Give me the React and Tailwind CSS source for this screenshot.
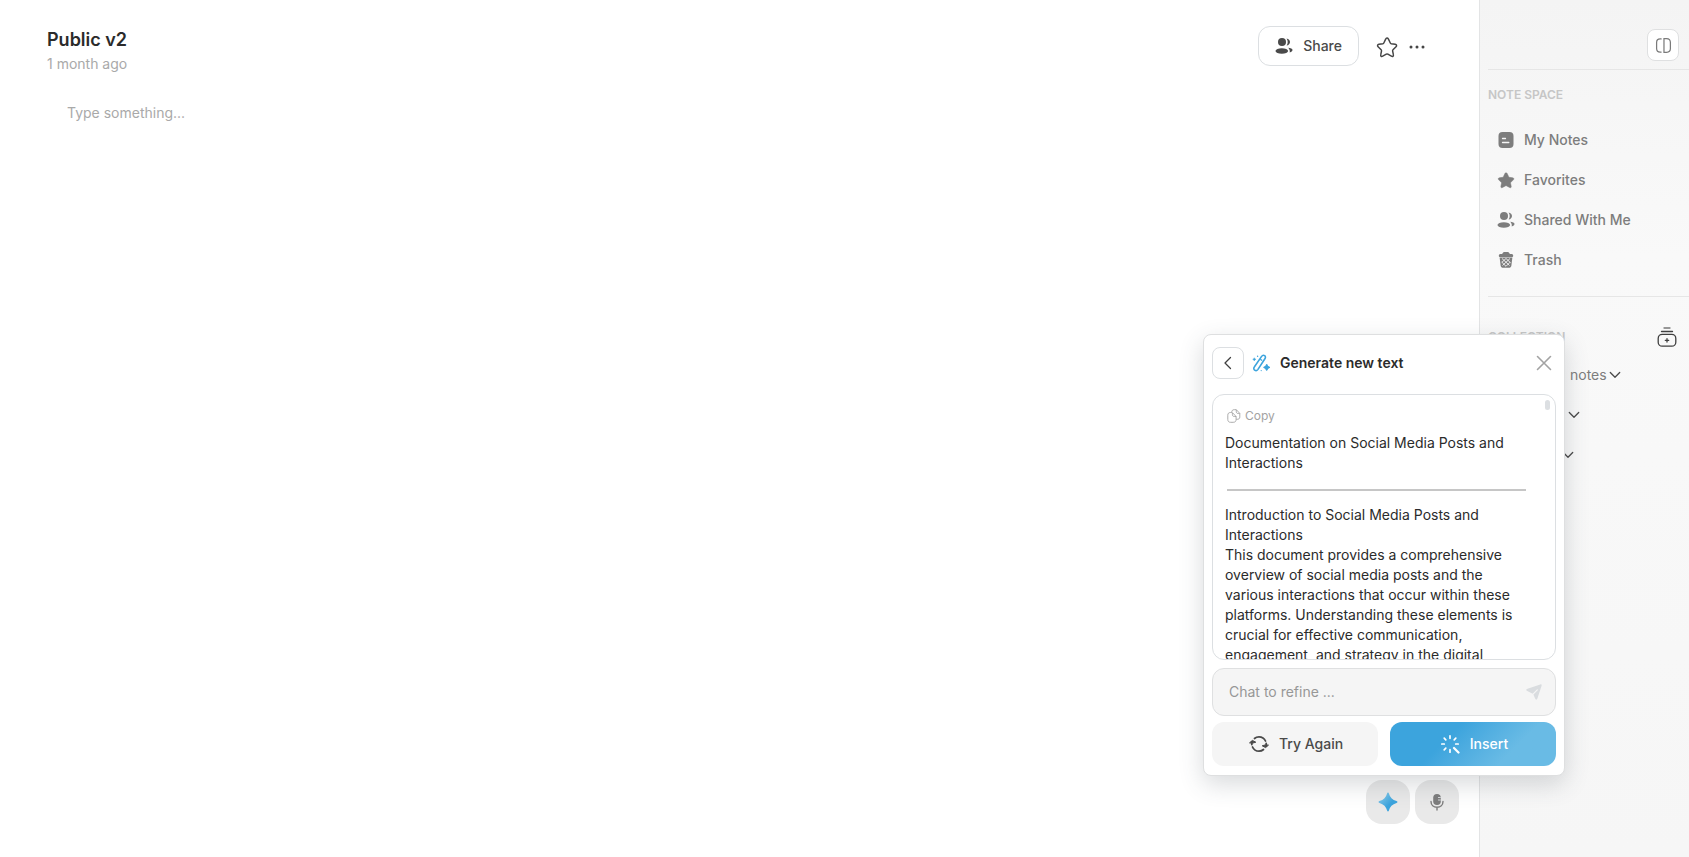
import React, { useState } from 'react';

const UsersIcon = ({ className }) => (
    <svg className={className} viewBox="0 0 18 18" fill="currentColor" aria-hidden="true">
        <circle cx="7" cy="5" r="4" />
        <ellipse cx="6.8" cy="14" rx="6.3" ry="2.8" />
        <path d="M11.6 1.4c2 .3 3.4 1.800 3.400 3.600s-1.400 3.300-3.400 3.600c.7-1 1.100-2.200 1.100-3.600s-.4-2.600-1.100-3.600z" />
        <path d="M13.200 10.800c2.300.1 4.300 1 4.300 2.200 0 1.100-1.100 2-2.800 2.400.4-1.700-.2-3.300-1.500-4.600z" />
    </svg>
);

const NoteIcon = ({ className }) => (
    <svg className={className} viewBox="0 0 18 18" aria-hidden="true">
        <rect x="1.500" y="1" width="15" height="16" rx="4" fill="currentColor" />
        <path d="M5.500 7.500H8.500M5.500 11.500H11.800" stroke="#f6f6f6" strokeWidth="1.300" strokeLinecap="round" />
    </svg>
);

const STAR = 'M9 1.700c.6 0 .9.400 1.200.9l1.500 3.100c.2.400.4.500.8.600l3.200.5c1.200.2 1.500 1.200.7 2l-2.500 2.500c-.3.300-.4.600-.3 1l.6 3c.3 1.300-.6 1.800-1.600 1.200l-2.900-1.600c-.4-.2-.9-.2-1.300 0l-2.900 1.600c-1 .6-1.900.1-1.600-1.200l.6-3c.1-.4 0-.7-.3-1L1.700 8.800c-.8-.8-.5-1.800.7-2l3.200-.5c.4-.1.600-.2.800-.6l1.500-3.100c.2-.5.5-.9 1.100-.9z';

const StarIcon = ({ className, filled }) => (
    <svg
        className={className}
        viewBox="0 0 18 18"
        fill={filled ? 'currentColor' : 'none'}
        stroke="currentColor"
        strokeWidth={filled ? 0.5 : 1.2}
        aria-hidden="true"
    >
        <path d={STAR} />
    </svg>
);

const TrashIcon = ({ className }) => (
    <svg className={className} viewBox="0 0 18 18" aria-hidden="true">
        <path
            d="M2.600 6.400h12.800l-1 8c-.2 1.500-1.200 2.400-2.700 2.400H6.300c-1.500 0-2.500-.9-2.700-2.400z"
            fill="currentColor"
        />
        <path
            d="M1.800 4.700C1.800 3.600 2.600 3 3.600 3h1.500l.7-1.100C6.100 1.300 6.600 1 7.300 1h3.400c.7 0 1.200.300 1.500.9l.7 1.100h1.500c1 0 1.800.6 1.800 1.700 0 .8-.5 1.300-1.200 1.300H3c-.7 0-1.200-.5-1.200-1.300z"
            fill="currentColor"
        />
        <path d="M5 7.500l7.500 7M9 7.500l4.500 4.200M4.700 11l4.300 4.300M13 7.500l-7.500 7M9 7.500l-4.300 4M13.300 11L9 15.300" stroke="#f8f8f8" strokeWidth="0.900" />
    </svg>
);

const PanelIcon = ({ className }) => (
    <svg className={className} viewBox="0 0 18 18" fill="none" stroke="currentColor" strokeWidth="1.300" aria-hidden="true">
        <path d="M6.500 2H5.500C3 2 1.700 3.300 1.700 5.800v6.400C1.700 14.700 3 16 5.500 16h1" strokeLinecap="round" />
        <path d="M9.500 1.800V16.200h2.800c2.700 0 4-1.300 4-4V5.800c0-2.700-1.300-4-4-4z" />
    </svg>
);

const AddCollectionIcon = ({ className }) => (
    <svg className={className} viewBox="0 0 20 20" fill="none" stroke="currentColor" strokeWidth="1.300" strokeLinecap="round" aria-hidden="true">
        <path d="M7 1h6" stroke="#777" />
        <path d="M4.500 4.500h11" />
        <rect x="1.200" y="7.400" width="17.600" height="11.800" rx="4" />
        <path d="M10 11.600v3.400M8.300 13.300h3.400" />
    </svg>
);

const ChevronIcon = ({ className }) => (
    <svg className={className} viewBox="0 0 12 12" fill="none" stroke="currentColor" strokeWidth="1.300" strokeLinecap="round" strokeLinejoin="round" aria-hidden="true">
        <path d="M1.300 3.500L6 8.300l4.700-4.800" />
    </svg>
);

const WandIcon = ({ className }) => (
    <svg className={className} viewBox="0 0 18 18" fill="none" stroke="currentColor" strokeWidth="1.600" strokeLinejoin="round" aria-hidden="true">
        <path d="M2.300 13L9.600 2.400c.8-1.100 2-1.400 3-.7s1.100 1.900.3 3L5.800 15.600c-.8 1.100-2.100 1.300-3.100.6s-1.200-2.100-.4-3.200z" />
        <path d="M8.300 5.200l1.800 1.300" strokeWidth="1.300" />
        <path d="M14.700 10.800l.9 1.700 1.700.9-1.700.9-.9 1.700-.9-1.700-1.700-.9 1.700-.9z" fill="currentColor" />
        <path d="M2.300 3.700l.6 1 1 .6-1 .6-.6 1-.6-1-1-.6 1-.6z" fill="currentColor" strokeWidth="0.400" />
        <circle cx="5.600" cy="2.200" r=".7" fill="currentColor" stroke="none" />
        <circle cx="9.200" cy="16.600" r=".6" fill="currentColor" stroke="none" />
    </svg>
);

const CopyIcon = ({ className }) => (
    <svg className={className} viewBox="0 0 14 14" fill="none" stroke="currentColor" strokeWidth="0.900" strokeLinejoin="round" aria-hidden="true">
        <path d="M4.700 3.500H3.600C1.600 3.500.8 4.500.8 6.200v4.200c0 1.900.9 2.900 2.900 2.900h2.500c2 0 2.900-1 2.900-2.900V7.500L5.400 3.600" />
        <path d="M5.400 3.700v1.700c0 1.500.6 2.100 2 2.100h1.700" />
        <path d="M4.700 3.500C4.700 1.600 5.500.7 7.300.7h2l3.500 3.700v3.500c0 1.600-.9 2.400-2.500 2.400H9.200" />
        <path d="M9.300.8v1.700c0 1.400.6 2 2 2h1.400" />
    </svg>
);

const RefreshIcon = ({ className }) => (
    <svg className={className} viewBox="0 0 20 20" fill="none" stroke="currentColor" strokeWidth="1.800" strokeLinecap="round" aria-hidden="true">
        <path d="M5.500 4.500C6.800 3.300 8.300 2.800 10 2.800c3 0 5.400 1.700 6.500 4.200" />
        <path d="M14.500 15.500c-1.300 1.200-2.800 1.700-4.500 1.700-3 0-5.400-1.700-6.500-4.200" />
        <path d="M2.800 8v2.500M17.200 12V9.500" />
        <path d="M.8 8.600l2.600-2.200 3.400 1.800-3 .9zM19.200 11.400l-2.600 2.200-3.400-1.800 3-.9z" fill="currentColor" strokeWidth="1" strokeLinejoin="round" />
    </svg>
);

const BurstIcon = ({ className }) => (
    <svg className={className} viewBox="0 0 20 20" fill="none" stroke="currentColor" strokeWidth="1.700" strokeLinecap="round" aria-hidden="true">
        <path d="M10 1.800v2.500M10 15.700v2.500M1.800 10h2.500M15.700 10h2.500M4.200 4.200l1.600 1.600M15.800 4.200l-1.600 1.600M4.200 15.800l1.600-1.600" />
        <path d="M14 14l4.500 4.500" strokeWidth="2.200" />
    </svg>
);

const SendIcon = ({ className }) => (
    <svg className={className} viewBox="0 0 18 18" aria-hidden="true">
        <path d="M15.300 1.400c1-.3 1.600.3 1.300 1.300l-4.200 12.800c-.5 1.500-1.700 1.500-2.300.1L8.200 11 2.300 8.100C.8 7.400.9 6.200 2.500 5.700z" fill="currentColor" />
        <path d="M8.300 10.900l4-4" stroke="#f5f5f5" strokeWidth="1.200" strokeLinecap="round" />
    </svg>
);

const SparkleIcon = ({ className }) => (
    <svg className={className} viewBox="0 0 20 20" aria-hidden="true">
        <defs>
            <linearGradient id="sparkle" x1="0" y1="0" x2="1" y2="1">
                <stop offset="0.300" stopColor="#69bbe5" />
                <stop offset="0.600" stopColor="#3ca4dd" />
            </linearGradient>
        </defs>
        <path
            d="M10 .5c.4 0 .7.300.9.9.9 3.700 3.500 6.400 7.600 7.600.7.200 1 .5 1 1s-.3.800-1 1c-4.100 1.200-6.700 3.900-7.600 7.600-.2.600-.5.900-.9.900s-.7-.3-.9-.9C8.200 14.900 5.600 12.200 1.500 11c-.7-.2-1-.5-1-1s.3-.8 1-1c4.100-1.200 6.700-3.900 7.600-7.600.2-.6.500-.9.900-.9z"
            fill="url(#sparkle)"
        />
    </svg>
);

const MicIcon = ({ className }) => (
    <svg className={className} viewBox="0 0 18 18" aria-hidden="true">
        <rect x="5.200" y="1" width="7.600" height="11" rx="3.800" fill="currentColor" />
        <path d="M10 4.500h2.800M10 7h2.800" stroke="#dfe1e3" strokeWidth="0.900" />
        <path d="M3 8.500c0 3.500 2.600 5.800 6 5.800s6-2.300 6-5.800M9 14.300V17" fill="none" stroke="currentColor" strokeWidth="1.400" strokeLinecap="round" />
    </svg>
);

const navItems = [
    { label: 'My Notes', icon: <NoteIcon className="size-[18px]" /> },
    { label: 'Favorites', icon: <StarIcon filled className="size-[18px]" /> },
    { label: 'Shared With Me', icon: <UsersIcon className="size-[18px]" /> },
    { label: 'Trash', icon: <TrashIcon className="size-[18px]" /> },
];

const Header = () => (
    <header className="flex items-start justify-between pl-[47px] pr-[53px] pt-[26px]">
        <div className="pt-0.5">
            <h1 className="text-lg leading-6 font-semibold text-[#2b2b2b]">Public v2</h1>
            <p className="mt-0.5 text-sm leading-5 text-[#a9a9a9]">1 month ago</p>
        </div>
        <div className="flex items-center">
            <button
                type="button"
                className="flex h-10 items-center gap-2.5 rounded-xl border border-[#dcdfe2] bg-white px-4 text-sm font-medium text-[#4a4a4a]"
            >
                <UsersIcon className="size-[18px]" />
                Share
            </button>
            <div className="ml-[17px] flex items-center gap-2.5 pt-0.5 text-[#454545]">
                <button type="button" aria-label="Add to favorites">
                    <StarIcon className="size-[22px]" />
                </button>
                <button type="button" aria-label="More">
                    <svg className="size-[18px]" viewBox="0 0 18 18" fill="currentColor" aria-hidden="true">
                        <circle cx="3" cy="9" r="1.500" />
                        <circle cx="9" cy="9" r="1.500" />
                        <circle cx="15" cy="9" r="1.500" />
                    </svg>
                </button>
            </div>
        </div>
    </header>
);

const Sidebar = () => (
    <aside className="flex w-[210px] shrink-0 flex-col border-l border-[#e3e4e5] bg-linear-to-b from-[#f4f4f4] via-[#f9f9f9] via-30% to-[#f6f6f6] pl-2">
        <div className="flex h-[70px] items-end justify-end border-b border-[#e6e6e6] pr-2.5 pb-2">
            <button
                type="button"
                aria-label="Toggle sidebar"
                className="flex size-8 items-center justify-center rounded-lg border border-[#dfe0e1] bg-white text-[#7a7a7a]"
            >
                <PanelIcon className="size-[17px]" />
            </button>
        </div>
        <div className="border-b border-[#e6e6e6] pt-4 pb-4">
            <h2 className="text-xs leading-[18px] font-semibold text-[#c6c6c6]">NOTE SPACE</h2>
            <nav className="mt-4">
                {navItems.map((item) => (
                    <a
                        key={item.label}
                        href="#"
                        className="flex h-10 items-center gap-[9px] pl-[9px] text-sm font-medium text-[#7d7d7d]"
                    >
                        {item.icon}
                        {item.label}
                    </a>
                ))}
            </nav>
        </div>
        <div className="pt-[30px]">
            <div className="flex h-5 items-center justify-between pr-3">
                <h2 className="text-xs font-semibold text-[#c6c6c6]">COLLECTION</h2>
                <button type="button" aria-label="Add collection" className="text-[#3f3f3f]">
                    <AddCollectionIcon className="size-5" />
                </button>
            </div>
            <div className="mt-2 text-sm text-[#7d7d7d]">
                <button type="button" className="flex h-10 items-center gap-0.5 pl-[82px]">
                    notes
                    <ChevronIcon className="size-3 text-[#4a4a4a]" />
                </button>
                <button type="button" aria-label="Expand collection" className="flex h-10 items-center pl-20">
                    <ChevronIcon className="size-3 text-[#4a4a4a]" />
                </button>
                <button type="button" aria-label="Expand collection" className="flex h-10 items-center pl-[74px]">
                    <ChevronIcon className="size-3 text-[#4a4a4a]" />
                </button>
            </div>
        </div>
    </aside>
);

const GeneratePanel = () => {
    const [message, setMessage] = useState('');

    return (
        <section className="absolute right-[124px] bottom-[81px] w-[362px] rounded-lg border border-[#dedfe0] bg-white px-2 pt-3 pb-[9px] shadow-[0_8px_24px_rgba(60,70,80,0.2)]">
            <div className="flex items-center">
                <button
                    type="button"
                    aria-label="Back"
                    className="flex size-8 items-center justify-center rounded-lg border border-[#dcdfe2] text-[#3f3f3f]"
                >
                    <svg className="size-4" viewBox="0 0 16 16" fill="none" stroke="currentColor" strokeWidth="1.300" strokeLinecap="round" strokeLinejoin="round" aria-hidden="true">
                        <path d="M10.500 2.500L5 8l5.500 5.500" />
                    </svg>
                </button>
                <WandIcon className="ml-2 size-[18px] text-[#3ca4dd]" />
                <h2 className="ml-2.5 text-sm font-semibold text-[#2b2b2b]">Generate new text</h2>
                <button type="button" aria-label="Close" className="mr-1 ml-auto text-[#a3a3a3]">
                    <svg className="size-4" viewBox="0 0 16 16" stroke="currentColor" strokeWidth="1.600" strokeLinecap="round" aria-hidden="true">
                        <path d="M1.500 1.500l13 13M14.500 1.500l-13 13" />
                    </svg>
                </button>
            </div>
            <div className="mt-[15px] flex h-[266px] overflow-hidden rounded-xl border border-[#dcdfe2] pr-[5px] pl-3">
                <div className="h-full flex-1 overflow-hidden pt-[9px] pr-[15px] text-sm leading-5 text-[#2b2b2b]">
                    <button type="button" className="flex h-6 items-center gap-1 pl-0.5 text-xs text-[#a3a3a3]">
                        <CopyIcon className="size-[14px]" />
                        Copy
                    </button>
                    <p className="mt-[5px]">Documentation on Social Media Posts and Interactions</p>
                    <hr className="mt-4 mr-1 mb-3.5 ml-0.5 border-t-2 border-[#c6c6c6]" />
                    <p>Introduction to Social Media Posts and Interactions</p>
                    <p>
                        This document provides a comprehensive overview of social media posts and the various
                        interactions that occur within these platforms. Understanding these elements is crucial for
                        effective communication, engagement, and strategy in the digital
                    </p>
                </div>
                <div className="mt-[5px] h-2.5 w-[5px] shrink-0 rounded-full bg-[#dcdfe2]" />
            </div>
            <form
                className="mt-2 flex h-12 items-center rounded-xl border border-[#dfe0e1] bg-[#f5f5f5] pr-3 pl-4"
                onSubmit={(e) => e.preventDefault()}
            >
                <input
                    type="text"
                    aria-label="Chat to refine"
                    placeholder="Chat to refine ..."
                    className="min-w-0 flex-1 bg-transparent text-sm text-[#2b2b2b] outline-none placeholder:text-[#979797]"
                    value={message}
                    onChange={(e) => setMessage(e.target.value)}
                />
                <button type="submit" aria-label="Send" className="text-[#d9dcdf]">
                    <SendIcon className="size-[18px]" />
                </button>
            </form>
            <div className="mt-1.5 grid grid-cols-2 gap-3">
                <button
                    type="button"
                    className="flex h-11 items-center justify-center gap-2.5 rounded-xl bg-[#f5f5f5] pl-0.5 text-sm font-medium text-[#4a4a4a]"
                >
                    <RefreshIcon className="size-5" />
                    Try Again
                </button>
                <button
                    type="button"
                    className="flex h-11 items-center justify-center gap-2.5 rounded-xl bg-linear-135 from-[#3ca4dd] from-35% to-[#69bbe5] to-72% pl-0.5 text-sm font-medium text-white"
                >
                    <BurstIcon className="size-5" />
                    Insert
                </button>
            </div>
        </section>
    );
};

const App = () => {
    const [note, setNote] = useState('');

    return (
        <div className="relative flex min-h-screen bg-white font-['Inter',sans-serif]">
            <main className="flex min-w-0 flex-1 flex-col">
                <Header />
                <textarea
                    aria-label="Note"
                    placeholder="Type something..."
                    className="mt-[29px] ml-[67px] flex-1 resize-none text-sm leading-5 text-[#2b2b2b] outline-none placeholder:text-[#a9a9a9]"
                    value={note}
                    onChange={(e) => setNote(e.target.value)}
                />
                <div className="flex justify-end gap-[5px] pr-5 pb-[33px]">
                    <button
                        type="button"
                        aria-label="Assistant"
                        className="flex size-11 items-center justify-center rounded-2xl bg-[#e9e9e9]"
                    >
                        <SparkleIcon className="size-5" />
                    </button>
                    <button
                        type="button"
                        aria-label="Dictate"
                        className="flex size-11 items-center justify-center rounded-2xl bg-[#e9e9e9] text-[#7d7d7d]"
                    >
                        <MicIcon className="size-[18px]" />
                    </button>
                </div>
            </main>
            <Sidebar />
            <GeneratePanel />
        </div>
    );
};

export default App;
